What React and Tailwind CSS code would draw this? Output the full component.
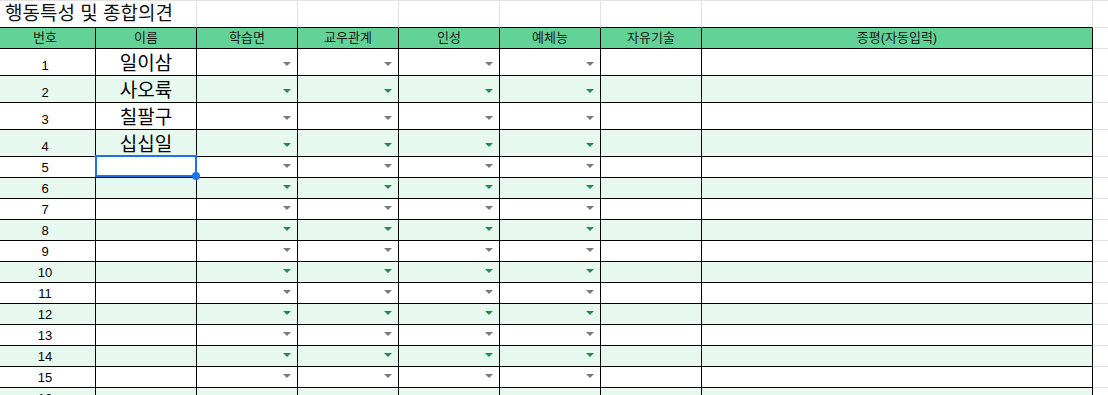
import React from "react";

const FONT = { fontFamily: '"Liberation Sans", "Noto Sans CJK KR", Arial, sans-serif' };

const headers = ["번호", "이름", "학습면", "교우관계", "인성", "예체능", "자유기술"];
const names = ["일이삼", "사오륙", "칠팔구", "십십일"];

function Arrow({ green }) {
  return (
    <svg width="8" height="4" viewBox="0 0 8 4" className="block">
      <polygon points="0,0 8,0 4,4" fill={green ? "#1e8e50" : "#7a7a7a"} />
    </svg>
  );
}

function Row({ n }) {
  const tall = n <= 4;
  const green = n % 2 === 0;
  const bg = green ? "bg-[#e7f9ef]" : "bg-white";
  const h = tall ? "h-[27px]" : "h-[21px]";
  const cell = `${h} ${bg} border-r border-b border-black shrink-0`;
  return (
    <div className="flex">
      <div className={`${cell} w-[101px] flex items-end justify-center pb-[2px] text-[13px] leading-[15px] text-black`}>
        {n}
      </div>
      <div className={`${cell} w-[101px] relative flex items-end justify-center text-[19px] leading-[23px] text-black`}>
        {names[n - 1] || ""}
        {n === 5 && (
          <div className="absolute z-10 left-[-1px] top-[-2px] w-[102px] h-[22px] border-2 border-[#1a73e8]">
            <div className="absolute right-[-5px] bottom-[-5px] w-[8px] h-[8px] rounded-full bg-[#1a73e8]" />
          </div>
        )}
      </div>
      {[0, 1, 2, 3].map((i) => (
        <div key={i} className={`${cell} w-[101px] flex items-end justify-end pr-[6px] pb-[9px]`}>
          <Arrow green={green} />
        </div>
      ))}
      <div className={`${cell} w-[101px]`} />
      <div className={`${cell} w-[391px]`} />
      <div className={`${h} flex-1 bg-white border-b border-[#e2e2e2]`} />
    </div>
  );
}

export default function App() {
  const rows = Array.from({ length: 16 }, (_, i) => i + 1);
  return (
    <div className="w-[1108px] h-[395px] overflow-hidden bg-white" style={FONT}>
      <div className="ml-[-5px] w-[1113px]">
        {/* title row */}
        <div className="flex h-[28px]">
          <div className="w-[202px] shrink-0 h-[28px] border-t border-[#e2e2e2] border-r border-r-[#e2e2e2] border-b border-b-black relative overflow-visible">
            <span className="absolute left-[10px] top-[0px] whitespace-nowrap text-[19px] leading-[26px] text-[#111]">
              행동특성 및 종합의견
            </span>
          </div>
          {[0, 1, 2, 3, 4].map((i) => (
            <div key={i} className="w-[101px] shrink-0 h-[28px] border-t border-[#e2e2e2] border-r border-r-[#e2e2e2] border-b border-b-black" />
          ))}
          <div className="w-[391px] shrink-0 h-[28px] border-t border-[#e2e2e2] border-r border-r-[#e2e2e2] border-b border-b-black" />
          <div className="flex-1 h-[28px] border-t border-b border-[#e2e2e2]" />
        </div>
        {/* header row */}
        <div className="flex h-[21px]">
          {headers.map((t) => (
            <div key={t} className="w-[101px] shrink-0 h-[21px] bg-[#63d297] border-r border-b border-black flex items-center justify-center text-[13px] leading-[20px] text-[#1a1a1a]">
              {t}
            </div>
          ))}
          <div className="w-[391px] shrink-0 h-[21px] bg-[#63d297] border-r border-b border-black flex items-center justify-center text-[13px] leading-[20px] text-[#1a1a1a]">
            종평(자동입력)
          </div>
          <div className="flex-1 h-[21px] border-b border-[#e2e2e2]" />
        </div>
        {rows.map((n) => (
          <Row key={n} n={n} />
        ))}
      </div>
    </div>
  );
}
